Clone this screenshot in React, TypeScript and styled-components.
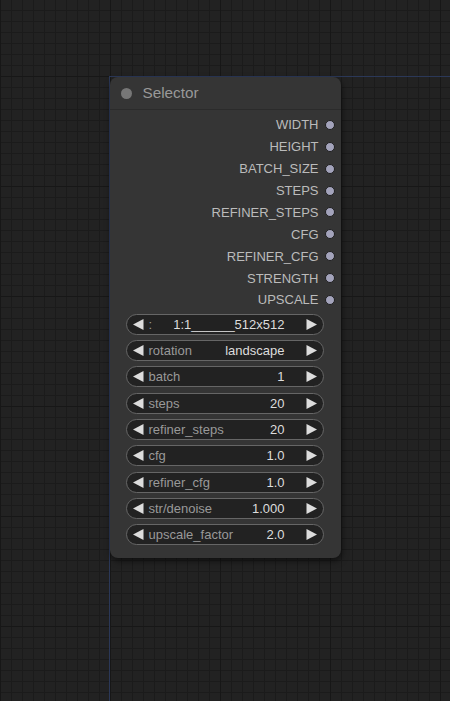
import React from "react";
import styled, { createGlobalStyle } from "styled-components";

const Global = createGlobalStyle`
  html, body { margin: 0; padding: 0; background: #222; }
  body { font-family: "Liberation Sans", Arial, sans-serif; }
`;

const Canvas = styled.div`
  position: relative;
  width: 450px;
  height: 701px;
  overflow: hidden;
  background-color: #222;
  background-image:
    linear-gradient(to right, #171717 1px, transparent 1px),
    linear-gradient(to bottom, #171717 1px, transparent 1px),
    linear-gradient(to right, #1b1b1b 1px, transparent 1px),
    linear-gradient(to bottom, #1b1b1b 1px, transparent 1px);
  background-size: 110px 110px, 110px 110px, 11px 11px, 11px 11px;
  background-position: 0 0, 0 76px, 0 0, 0 10px;
`;

const AxisV = styled.div`
  position: absolute;
  left: 109px;
  top: 76px;
  width: 1px;
  bottom: 0;
  background: #2b3858;
`;

const AxisH = styled.div`
  position: absolute;
  left: 109px;
  top: 76px;
  height: 1px;
  right: 0;
  background: #2b3858;
`;

const Node = styled.div`
  position: absolute;
  left: 109.5px;
  top: 77px;
  width: 231px;
  height: 481px;
  box-sizing: border-box;
  background: #353535;
  border-radius: 8px;
  box-shadow: 1px 3px 6px rgba(0, 0, 0, 0.55);
  display: flex;
  flex-direction: column;
`;

const Title = styled.div`
  height: 33px;
  box-sizing: border-box;
  border-bottom: 1px solid #2b2b2b;
  display: flex;
  align-items: center;
  padding-left: 11px;
  gap: 11px;
  color: #999;
  font-size: 15.3px;
`;

const Dot = styled.span`
  width: 11px;
  height: 11px;
  border-radius: 50%;
  background: #777;
`;

const Outputs = styled.div`
  padding-top: 4px;
  display: flex;
  flex-direction: column;
`;

const OutRow = styled.div`
  height: 21.875px;
  display: flex;
  justify-content: flex-end;
  align-items: center;
  padding-right: 6px;
  gap: 6px;
  color: #bbb;
  font-size: 13px;
`;

const Slot = styled.span`
  width: 8px;
  height: 8px;
  border-radius: 50%;
  background: #a3a3bb;
  border: 1px solid #1e1e1e;
`;

const Widgets = styled.div`
  padding: 3px 0 0 16px;
  display: flex;
  flex-direction: column;
  gap: 5.3px;
`;

const Widget = styled.div`
  width: 198px;
  height: 21px;
  box-sizing: border-box;
  background: #222;
  border: 1px solid #666;
  border-radius: 11px;
  display: flex;
  align-items: center;
  padding: 0 6px 0 6px;
  font-size: 13px;
`;

const Arrow = styled.svg`
  width: 11px;
  height: 11px;
  flex: none;
`;

const Label = styled.span`
  color: #999;
  margin-left: 5px;
  flex: 1;
  white-space: nowrap;
`;

const Value = styled.span`
  color: #ddd;
  margin-right: 21px;
  white-space: nowrap;
`;

const outputs = [
  "WIDTH",
  "HEIGHT",
  "BATCH_SIZE",
  "STEPS",
  "REFINER_STEPS",
  "CFG",
  "REFINER_CFG",
  "STRENGTH",
  "UPSCALE",
];

const widgets: [string, string][] = [
  [":", "1:1______512x512"],
  ["rotation", "landscape"],
  ["batch", "1"],
  ["steps", "20"],
  ["refiner_steps", "20"],
  ["cfg", "1.0"],
  ["refiner_cfg", "1.0"],
  ["str/denoise", "1.000"],
  ["upscale_factor", "2.0"],
];

const Left = () => (
  <Arrow viewBox="0 0 11 11">
    <polygon points="10.5,0 10.5,11 0,5.5" fill="#ddd" />
  </Arrow>
);
const Right = () => (
  <Arrow viewBox="0 0 11 11">
    <polygon points="0.5,0 0.5,11 11,5.5" fill="#ddd" />
  </Arrow>
);

export default function App() {
  return (
    <>
      <Global />
      <Canvas>
        <AxisV />
        <AxisH />
        <Node>
          <Title>
            <Dot />
            Selector
          </Title>
          <Outputs>
            {outputs.map((o) => (
              <OutRow key={o}>
                {o}
                <Slot />
              </OutRow>
            ))}
          </Outputs>
          <Widgets>
            {widgets.map(([l, v]) => (
              <Widget key={l}>
                <Left />
                <Label>{l}</Label>
                <Value>{v}</Value>
                <Right />
              </Widget>
            ))}
          </Widgets>
        </Node>
      </Canvas>
    </>
  );
}
